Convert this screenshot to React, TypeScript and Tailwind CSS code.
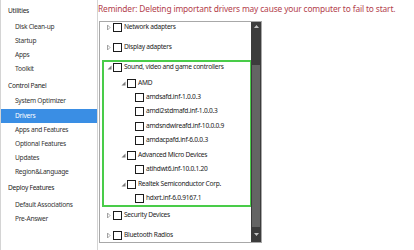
type Row = { label: string; level: 0 | 1 | 2; open?: boolean; mt: string };

const font = { fontFamily: '"Noto Sans", "Open Sans", sans-serif' };

const groupRows: Row[] = [
  { label: 'Sound, video and game controllers', level: 0, open: true, mt: '-mt-[2px]' },
  { label: 'AMD', level: 1, open: true, mt: 'mt-[2px]' },
  { label: 'amdsafd.inf-1.0.0.3', level: 2, mt: 'mt-0' },
  { label: 'amdi2stdmafd.inf-1.0.0.3', level: 2, mt: 'mt-0' },
  { label: 'amdsndwireafd.inf-10.0.0.9', level: 2, mt: 'mt-[1px]' },
  { label: 'amdacpafd.inf-6.0.0.3', level: 2, mt: 'mt-0' },
  { label: 'Advanced Micro Devices', level: 1, open: true, mt: 'mt-[1px]' },
  { label: 'atihdwt6.inf-10.0.1.20', level: 2, mt: 'mt-0' },
  { label: 'Realtek Semiconductor Corp.', level: 1, open: true, mt: 'mt-[1px]' },
  { label: 'hdxrt.inf-6.0.9167.1', level: 2, mt: 'mt-0' },
];

function Arrow({ open }: { open?: boolean }) {
  if (open) {
    return (
      <svg width="5" height="5" viewBox="0 0 5 5">
        <path d="M4.5 0.5 L4.5 4.5 L0.5 4.5 Z" fill="#7a7a7a" />
      </svg>
    );
  }
  return (
    <svg width="4" height="7" viewBox="0 0 4 7">
      <path d="M0.5 1 L3 3.5 L0.5 6 Z" fill="none" stroke="#9a9a9a" strokeWidth="0.9" />
    </svg>
  );
}

function TreeRow({ row, inGroup }: { row: Row; inGroup?: boolean }) {
  const pad =
    row.level === 0 ? (inGroup ? 'pl-[1px]' : 'pl-[5px]') : row.level === 1 ? 'pl-[15px]' : 'pl-[23px]';
  return (
    <div className={`flex items-center h-[14px] shrink-0 ${row.mt} ${pad}`}>
      <span className="w-[8px] flex items-center justify-center">
        {row.level < 2 && <Arrow open={row.open} />}
      </span>
      <span className="w-[9px] h-[9px] border border-[#1c1c1c] bg-white shrink-0" />
      <span className="ml-[2px] text-[6.6px] tracking-[-0.25px] text-[#222] whitespace-nowrap leading-none">
        {row.label}
      </span>
    </div>
  );
}

const side: { label: string; head?: boolean; active?: boolean; mt?: string }[] = [
  { label: 'Utilities', head: true, mt: 'mt-[4px]' },
  { label: 'Disk Clean-up', mt: 'mt-[2px]' },
  { label: 'Startup' },
  { label: 'Apps' },
  { label: 'Toolkit' },
  { label: 'Control Panel', head: true, mt: 'mt-[3px]' },
  { label: 'System Optimizer', mt: 'mt-[1px]' },
  { label: 'Drivers', active: true, mt: 'mt-[1px]' },
  { label: 'Apps and Features' },
  { label: 'Optional Features' },
  { label: 'Updates' },
  { label: 'Region&Language' },
  { label: 'Deploy Features', head: true, mt: 'mt-[2px]' },
  { label: 'Default Associations', mt: 'mt-[3px]' },
  { label: 'Pre-Answer' },
];

export default function App() {
  return (
    <div className="w-[414px] h-[250px] bg-white flex overflow-hidden" style={font}>
      <div className="w-[98px] h-full border-l border-r border-[#d4d4d4] flex flex-col">
        {side.map((s) => (
          <div
            key={s.label}
            className={`h-[14px] flex items-center text-[6.6px] tracking-[-0.25px] leading-none whitespace-nowrap ${
              s.mt ?? ''
            } ${s.head ? 'pl-[7px] text-[#222]' : 'pl-[14px] text-[#333]'} ${
              s.active ? 'bg-[#3a8ee4] text-white' : ''
            }`}
          >
            {s.label}
          </div>
        ))}
      </div>

      <div className="flex flex-col">
        <div className="h-[18px] flex items-center text-[8.4px] tracking-[-0.15px] text-[#b3404c] whitespace-nowrap leading-none">
          Reminder: Deleting important drivers may cause your computer to fail to start.
        </div>
        <div className="mt-[3px] ml-[1px] w-[163px] h-[222px] border border-[#a8a8a8] flex">
          <div className="w-[151px] flex flex-col">
            <TreeRow row={{ label: 'Network adapters', level: 0, mt: '-mt-[2px]' }} />
            <TreeRow row={{ label: 'Display adapters', level: 0, mt: 'mt-[6px]' }} />
            <div className="mt-[6px] ml-[2px] -mr-[1px] border-2 border-[#49cc49] flex flex-col">
              {groupRows.map((r) => (
                <TreeRow key={r.label} row={r} inGroup />
              ))}
            </div>
            <TreeRow row={{ label: 'Security Devices', level: 0, mt: 'mt-[1px]' }} />
            <TreeRow row={{ label: 'Bluetooth Radios', level: 0, mt: 'mt-[6px]' }} />
          </div>
          <div className="w-[10px] h-full bg-[#3c3c3c] flex flex-col">
            <div className="h-[8px] flex items-center justify-center">
              <svg width="5" height="3" viewBox="0 0 5 3">
                <path d="M0 3 L2.5 0 L5 3 Z" fill="#c4c4c4" />
              </svg>
            </div>
            <div className="h-[35px]" />
            <div className="h-[162px] mx-[1px] bg-[#646464]" />
            <div className="flex-1 flex items-center justify-center">
              <svg width="5" height="3" viewBox="0 0 5 3">
                <path d="M0 0 L5 0 L2.5 3 Z" fill="#c4c4c4" />
              </svg>
            </div>
          </div>
        </div>
      </div>
    </div>
  );
}
